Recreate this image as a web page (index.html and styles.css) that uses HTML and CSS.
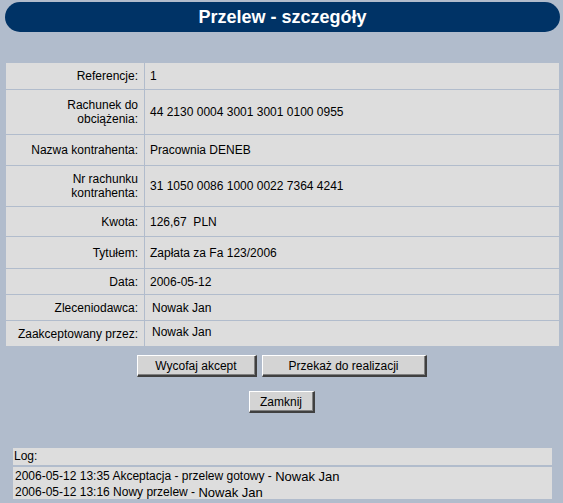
FILE: index.html
```html
<!DOCTYPE html>
<html lang="pl">
<head>
<meta charset="utf-8">
<title>Przelew - szczegóły</title>
<link rel="stylesheet" href="styles.css">
</head>
<body>
<div class="page">
  <h1 class="header">Przelew - szczegóły</h1>

  <table class="details">
    <tr class="r26"><th>Referencje:</th><td>1</td></tr>
    <tr class="r44"><th>Rachunek do obciążenia:</th><td>44 2130 0004 3001 3001 0100 0955</td></tr>
    <tr class="r30"><th>Nazwa kontrahenta:</th><td>Pracownia DENEB</td></tr>
    <tr class="r40"><th>Nr rachunku kontrahenta:</th><td>31 1050 0086 1000 0022 7364 4241</td></tr>
    <tr class="r29"><th>Kwota:</th><td>126,67&nbsp; PLN</td></tr>
    <tr class="r31"><th>Tytułem:</th><td>Zapłata za Fa 123/2006</td></tr>
    <tr class="r25"><th>Data:</th><td>2006-05-12</td></tr>
    <tr class="r25"><th>Zleceniodawca:</th><td class="ind">Nowak Jan</td></tr>
    <tr class="r25"><th>Zaakceptowany przez:</th><td class="ind up">Nowak Jan</td></tr>
  </table>

  <div class="actions">
    <button class="btn w120">Wycofaj akcept</button>
    <button class="btn w165">Przekaż do realizacji</button>
  </div>
  <div class="actions second">
    <button class="btn w66">Zamknij</button>
  </div>

  <div class="log">
    <div class="log-title">Log:</div>
    <div class="log-body">
      <div>2006-05-12 13:35 Akceptacja - przelew gotowy - <span class="who">Nowak Jan</span></div>
      <div>2006-05-12 13:16 Nowy przelew - <span class="who">Nowak Jan</span></div>
    </div>
  </div>
</div>
</body>
</html>
```

FILE: styles.css
```css
html, body {
  margin: 0;
  padding: 0;
  background: #b1bccc;
}

body {
  font-family: "Liberation Sans", Arial, sans-serif;
  font-size: 12px;
  color: #000;
  width: 563px;
  height: 503px;
  overflow: hidden;
}

.page {
  padding-top: 2px;
}

.header {
  margin: 0 3px 0 5px;
  height: 30px;
  line-height: 30px;
  border-radius: 15px;
  background: #003366;
  color: #fff;
  font-size: 18px;
  font-weight: bold;
  text-align: center;
}

.details {
  margin: 30px 0 0 5px;
  width: 555px;
  border-collapse: separate;
  border-spacing: 1px;
  background: #b1bccc;
}

.details th,
.details td {
  background: #dddddd;
  font-weight: normal;
  vertical-align: middle;
  padding: 0;
}

.details th {
  width: 126px;
  padding: 0 6px 0 6px;
  text-align: right;
  line-height: 14px;
}

.details td {
  padding-left: 5px;
  text-align: left;
}

.details td.ind {
  padding-left: 7px;
}

.details td.up {
  padding-bottom: 3px;
}

.r25 { height: 25px; }
.r26 { height: 26px; }
.r29 { height: 29px; }
.r30 { height: 30px; }
.r31 { height: 31px; }
.r40 { height: 40px; }
.r44 { height: 44px; }

.actions {
  display: flex;
  justify-content: center;
  gap: 5px;
  margin-top: 8px;
}

.actions.second {
  margin-top: 14px;
}

.btn {
  height: 22px;
  padding: 0;
  background: #d4d4d4;
  font-family: "Liberation Sans", Arial, sans-serif;
  font-size: 12px;
  color: #000;
  border-style: solid;
  border-width: 1px 2px 2px 1px;
  border-color: #ffffff #404040 #404040 #ffffff;
  box-shadow: inset -1px -1px 0 #808080;
}

.w120 { width: 120px; }
.w165 { width: 165px; }
.w66 { width: 66px; }

.log {
  margin: 35px 11px 0 13px;
}

.log-title {
  background: #dddddd;
  height: 17px;
  line-height: 17px;
  padding-left: 1px;
}

.log-body {
  margin-top: 2px;
  background: #dddddd;
  height: 32px;
  padding: 1px 0 0 2px;
  box-sizing: border-box;
  line-height: 15px;
}

.who {
  font-size: 13px;
  position: relative;
  top: 1px;
}
```
